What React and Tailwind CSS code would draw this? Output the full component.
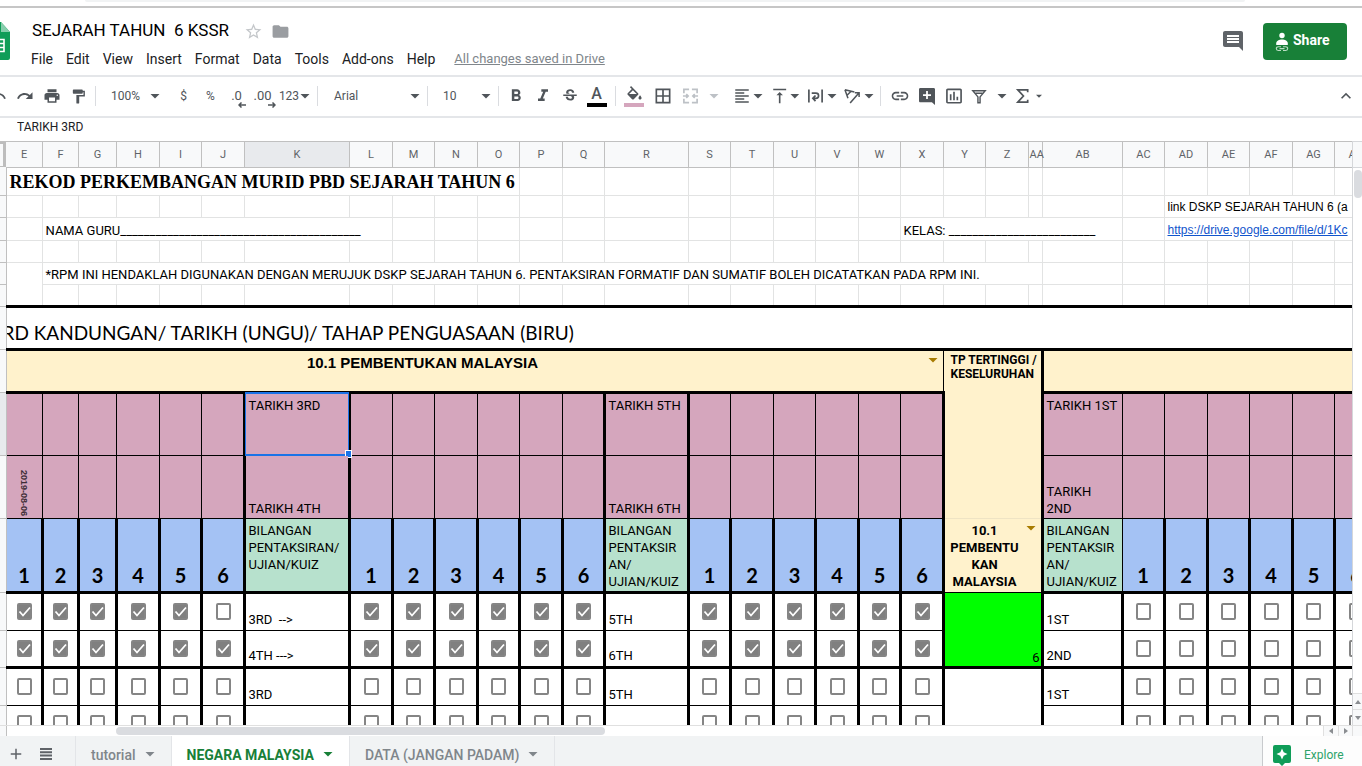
import React from "react";
import {
  MdUndo, MdRedo, MdPrint, MdFormatPaint, MdFormatBold, MdFormatItalic, MdStrikethroughS,
  MdBorderAll, MdFormatAlignLeft, MdVerticalAlignTop, MdLink, MdInsertChartOutlined,
  MdKeyboardArrowUp, MdStarBorder, MdFolder, MdComment, MdAdd,
} from "react-icons/md";

const EDGES = [
  0, 6, 42, 78, 116, 159, 201, 244, 349, 392, 434, 477, 519, 562, 604, 688, 730, 773, 815, 858, 900,
  943, 985, 1028, 1042, 1122, 1164, 1207, 1249, 1292, 1334, 1377,
];
const WIDTHS = EDGES.slice(1).map((edge, i) => edge - EDGES[i]);
const TABLE_WIDTH = EDGES[EDGES.length - 1];
const COLUMNS = "E F G H I J K L M N O P Q R S T U V W X Y Z AA AB AC AD AE AF AG AH".split(" ");

const R0 = "border-r border-r-[#e2e3e3]";
const B0 = "border-b border-b-[#e2e3e3]";
const R1 = "border-r border-r-black";
const B1 = "border-b border-b-black";
const R3 = "border-r-[3px] border-r-black";
const B3 = "border-b-[3px] border-b-black";

const group = (label) => [1, 2, 3, 4, 5, 6].map((n) => ({ kind: "num", n, id: label + n, last: n === 6 }));
const LAYOUT = [
  ...group("a"),
  { kind: "label", id: "K", slot: 0 },
  ...group("b"),
  { kind: "label", id: "R", slot: 1 },
  ...group("c"),
  { kind: "summary", id: "Y" },
  { kind: "label", id: "AB", slot: 2 },
  ...group("d"),
];

function RowHead({ active }) {
  return (
    <th
      scope="row"
      aria-label="Row"
      className={`border-r border-b border-[#c0c0c0] p-0 ${active ? "bg-[#e8eaed]" : "bg-[#f8f9fa]"}`}
    />
  );
}

function Blank({ count, bottom = B0 }) {
  return Array.from({ length: count }, (_, i) => <td key={i} className={`${R0} ${bottom} p-0`} />);
}

function Text({ span, children, bottom = B0, className = "align-bottom" }) {
  return (
    <td colSpan={span} className={`${R0} ${bottom} overflow-hidden pb-px pl-[3px] whitespace-pre ${className}`}>
      {children}
    </td>
  );
}

function Tick({ on, name }) {
  return (
    <label className="grid place-items-center">
      <input
        type="checkbox"
        defaultChecked={on}
        aria-label={name}
        className="peer col-start-1 row-start-1 h-[17px] w-[15px] appearance-none rounded-[2px] border-2 border-[#858585] checked:bg-[#808080]"
      />
      <svg viewBox="0 0 15 17" className="pointer-events-none col-start-1 row-start-1 hidden h-[17px] w-[15px] peer-checked:block">
        <path d="M2.5 8.5l3.500 4 7-8" fill="none" stroke="#fff" strokeWidth="1.8" />
      </svg>
    </label>
  );
}

function DateRow({ top }) {
  const labels = top ? ["TARIKH 3RD", "TARIKH 5TH", "TARIKH 1ST"] : ["TARIKH 4TH", "TARIKH 6TH", "TARIKH\n2ND"];
  return (
    <tr className="h-[63px]">
      <RowHead active={top} />
      {LAYOUT.map((c) => {
        if (c.kind === "summary") return null;
        if (c.kind === "num") {
          return (
            <td key={c.id} className={`${c.last ? R3 : R1} ${B1} bg-[#d5a6bd] p-0 align-bottom`}>
              {!top && c.id === "a1" && (
                <div className="flex justify-center pb-px font-['Liberation_Sans',Arial,sans-serif]">
                  <span className="text-[9px] leading-3 font-bold text-[#3d2d36] [writing-mode:vertical-rl]">2019-08-06</span>
                </div>
              )}
            </td>
          );
        }
        return (
          <td
            key={c.id}
            className={`${c.slot < 2 ? R3 : R1} ${B1} relative bg-[#d5a6bd] pl-[3px] whitespace-pre ${top ? "pt-[3px] align-top" : "pb-px align-bottom"}`}
          >
            {labels[c.slot]}
            {top && c.slot === 0 && (
              <span className="absolute -inset-x-px -top-0.5 -bottom-px border-x border-y-2 border-[#1a73e8]">
                <span className="absolute -right-1 -bottom-1 h-2 w-[7px] border border-white bg-[#1a73e8]" />
              </span>
            )}
          </td>
        );
      })}
    </tr>
  );
}

function CheckRow({ labels, checked, thick, summary }) {
  const bottom = thick ? B3 : B1;
  return (
    <tr className={thick ? "h-[37px]" : "h-[38px]"}>
      <RowHead />
      {LAYOUT.map((c) => {
        if (c.kind === "summary") return summary ? React.cloneElement(summary, { key: c.id }) : null;
        if (c.kind === "num") {
          return (
            <td key={c.id} className={`${R3} ${bottom} p-0 pl-px`}>
              <Tick on={checked(c.id)} name={`${c.id} ${labels[0]}`} />
            </td>
          );
        }
        return (
          <td key={c.id} className={`${R3} ${bottom} pb-0.5 pl-[3px] align-bottom whitespace-pre`}>
            {labels[c.slot]}
          </td>
        );
      })}
    </tr>
  );
}

function Grid() {
  return (
    <table
      className="table-fixed border-collapse font-['Roboto',sans-serif] text-[13px] leading-[17px] text-black"
      style={{ width: TABLE_WIDTH }}
    >
      <colgroup>
        {WIDTHS.map((w, i) => (
          <col key={i} style={{ width: w }} />
        ))}
      </colgroup>
      <thead>
        <tr className="h-[25px]">
          <th aria-label="Select all" className="bg-[#bdbdbd] p-0">
            <div className="h-[22px] w-[3px] bg-[#f8f9fa]" />
          </th>
          {COLUMNS.map((c) => (
            <th
              key={c}
              scope="col"
              className={`border-r border-b border-[#c0c0c0] p-0 pl-px text-center text-[11px] font-normal text-[#5f6368] ${c === "K" ? "bg-[#e8eaed]" : "bg-[#f8f9fa]"}`}
            >
              {c}
            </th>
          ))}
        </tr>
      </thead>
      <tbody>
        <tr className="h-[28px]">
          <RowHead />
          <Text span={11} className="align-bottom font-['Liberation_Serif',serif] text-[18px] leading-6 font-bold">
            REKOD PERKEMBANGAN MURID PBD SEJARAH TAHUN 6
          </Text>
          <Blank count={19} />
        </tr>
        <tr className="h-[22px]">
          <RowHead />
          <Blank count={25} />
          <Text span={5} className="align-bottom font-['Liberation_Sans',Arial,sans-serif] text-[12px]">link DSKP SEJARAH TAHUN 6 (a</Text>
        </tr>
        <tr className="h-[23px]">
          <RowHead />
          <Blank count={1} />
          <Text span={7}>NAMA GURU_________________________________________</Text>
          <Blank count={11} />
          <Text span={5}>KELAS: _________________________</Text>
          <Blank count={1} />
          <Text span={5} className="align-bottom font-['Liberation_Sans',Arial,sans-serif] text-[12px]">
            <a href="#dskp" className="text-[#1155cc] underline">https://drive.google.com/file/d/1Kc</a>
          </Text>
        </tr>
        <tr className="h-[22px]">
          <RowHead />
          <Blank count={30} />
        </tr>
        <tr className="h-[22px]">
          <RowHead />
          <td rowSpan={2} className={`${R0} ${B3} p-0`} />
          <Text span={22}>
            *RPM INI HENDAKLAH DIGUNAKAN DENGAN MERUJUK DSKP SEJARAH TAHUN 6. PENTAKSIRAN FORMATIF DAN SUMATIF BOLEH DICATATKAN PADA RPM INI.
          </Text>
          <Blank count={7} />
        </tr>
        <tr className="h-[22px]">
          <RowHead />
          <Blank count={29} bottom={B3} />
        </tr>
        <tr className="h-[43px]">
          <RowHead />
          <td colSpan={30} className={`${B3} overflow-hidden p-0 align-bottom`}>
            <div className="-ml-1 pb-[3px] font-['Lato',sans-serif] text-[19px] leading-6 whitespace-pre">
              RD KANDUNGAN/ TARIKH (UNGU)/ TAHAP PENGUASAAN (BIRU)
            </div>
          </td>
        </tr>
        <tr className="h-[43px]">
          <RowHead />
          <td colSpan={20} className={`${R1} ${B3} bg-[#fff2cc] p-0 align-top`}>
            <div className="flex items-start pt-[3px] pr-1">
              <span className="flex-1 pr-[96px] pl-2 text-center font-['Liberation_Sans',Arial,sans-serif] text-[15px] font-bold">
                10.1 PEMBENTUKAN MALAYSIA
              </span>
              <button type="button" aria-label="Filter topic" className="text-[#a87c00]">
                <Caret className="h-3 w-3" />
              </button>
            </div>
          </td>
          <td colSpan={3} rowSpan={3} className={`${R3} border-b border-b-[#efe4c4] bg-[#fff2cc] p-0 pt-0.5 align-top`}>
            <div className="pl-1.5 text-[12px] leading-[14px] font-bold whitespace-pre">{"TP TERTINGGI /\nKESELURUHAN"}</div>
          </td>
          <td colSpan={7} className={`${B3} bg-[#fff2cc] p-0`} />
        </tr>
        <DateRow top />
        <DateRow />
        <tr className="h-[74px]">
          <RowHead />
          {LAYOUT.map((c) => {
            if (c.kind === "num") {
              return (
                <td key={c.id} className={`${R3} ${B3} bg-[#a4c2f4] pb-1 pl-px text-center align-bottom font-['Lato',sans-serif] text-[20px] leading-6 font-bold`}>
                  {c.n}
                </td>
              );
            }
            if (c.kind === "summary") {
              return (
                <td key={c.id} colSpan={3} className={`${R3} ${B1} bg-[#fff2cc] p-0 pt-[3px] align-top`}>
                  <div className="flex items-start pr-1">
                    <span className="flex-1 text-center font-bold whitespace-pre">{"10.1\nPEMBENTU\nKAN\nMALAYSIA"}</span>
                    <button type="button" aria-label="Filter result" className="text-[#a87c00]">
                      <Caret className="h-3 w-3" />
                    </button>
                  </div>
                </td>
              );
            }
            return (
              <td key={c.id} className={`${c.slot < 2 ? R3 : R1} ${B3} bg-[#b7e1cd] pt-[3px] pl-[3px] align-top whitespace-pre`}>
                {c.slot === 0 ? "BILANGAN\nPENTAKSIRAN/\nUJIAN/KUIZ" : "BILANGAN\nPENTAKSIR\nAN/\nUJIAN/KUIZ"}
              </td>
            );
          })}
        </tr>
        <CheckRow
          labels={["3RD  -->", "5TH", "1ST"]}
          checked={(id) => id[0] !== "d" && id !== "a6"}
          summary={
            <td colSpan={3} rowSpan={2} className={`${R3} ${B3} bg-[#00ff00] pr-px text-right align-bottom`}>
              6
            </td>
          }
        />
        <CheckRow labels={["4TH --->", "6TH", "2ND"]} checked={(id) => id[0] !== "d"} thick />
        <CheckRow
          labels={["3RD", "5TH", "1ST"]}
          checked={() => false}
          summary={<td colSpan={3} rowSpan={2} className={`${R3} ${B3} p-0`} />}
        />
        <CheckRow labels={["", "", ""]} checked={() => false} thick />
      </tbody>
    </table>
  );
}

function Caret({ className = "h-2 w-2" }) {
  return (
    <svg viewBox="0 0 12 12" className={className} fill="currentColor">
      <path d="M1.500 4h9L6 8.500z" />
    </svg>
  );
}

function Tool({ label, children, className = "w-[27px]" }) {
  return (
    <button type="button" aria-label={label} className={`flex h-7 shrink-0 items-center justify-center ${className}`}>
      {children}
    </button>
  );
}

function MenuTool({ label, children, className = "w-[37px]", caret = "h-3 w-3" }) {
  return (
    <button type="button" aria-label={label} className={`flex h-7 shrink-0 items-center justify-between pr-0.5 pl-1 ${className}`}>
      {children}
      <Caret className={caret} />
    </button>
  );
}

function Divider() {
  return <span className="mx-[3px] h-5 w-px shrink-0 bg-[#dadce0]" />;
}

function Picker({ label, value, className }) {
  return (
    <label className={`grid shrink-0 items-center ${className}`}>
      <select aria-label={label} defaultValue={value} className="col-start-1 row-start-1 appearance-none pl-3 outline-none">
        <option>{value}</option>
      </select>
      <Caret className="pointer-events-none col-start-1 row-start-1 mr-[3px] h-3 w-3 justify-self-end" />
    </label>
  );
}

function Stroke({ d, width = 1.8, className = "h-[18px] w-[17px]" }) {
  return (
    <svg viewBox="0 0 18 18" className={className} fill="none" stroke="currentColor" strokeWidth={width}>
      <path d={d} />
    </svg>
  );
}

function Decimals({ text, d }) {
  return (
    <span className="relative leading-4">
      {text}
      <svg viewBox="0 0 8 6" className="absolute -right-1 -bottom-1 h-1.5 w-2" fill="none" stroke="currentColor" strokeWidth="1.500">
        <path d={d} />
      </svg>
    </span>
  );
}

function Header() {
  return (
    <header className="flex h-[67px] shrink-0 items-start">
      <svg viewBox="0 0 10 38" className="mt-3.5 h-[38px] w-2.5 shrink-0">
        <path d="M0 0h1l9 10v26a2 2 0 0 1-2 2H0z" fill="#0f9d58" />
        <path d="M1 0l9 10H1z" fill="#87ceac" />
        <path d="M0 17.500h4v12H0M0 21.500h4M0 25.500h4" fill="none" stroke="#fff" strokeWidth="1.600" />
      </svg>
      <div className="flex flex-col pt-[11px] pl-[22px]">
        <div className="flex items-center">
          <input
            aria-label="Document title"
            defaultValue="SEJARAH TAHUN  6 KSSR"
            className="h-6 w-[212px] text-[17px] whitespace-pre text-black outline-none"
          />
          <button type="button" aria-label="Star" className="text-[#c4c7ca]">
            <MdStarBorder className="h-[19px] w-[19px]" />
          </button>
          <button type="button" aria-label="Move to folder" className="ml-2 text-[#9a9da1]">
            <MdFolder className="h-[19px] w-[19px]" />
          </button>
        </div>
        <nav className="-ml-px flex items-center gap-[13px] pt-1 text-[14px] leading-6 text-[#202124]">
          {["File", "Edit", "View", "Insert", "Format", "Data", "Tools", "Add-ons", "Help"].map((m) => (
            <button type="button" key={m}>{m}</button>
          ))}
          <a href="#history" className="ml-1.5 text-[13px] text-[#80868b] underline">All changes saved in Drive</a>
        </nav>
      </div>
      <div className="mr-[15px] ml-auto flex items-center gap-[18px] pt-[15px]">
        <button type="button" aria-label="Comments" className="pb-0.5 text-[#5f6368]">
          <MdComment className="h-6 w-6" />
        </button>
        <button type="button" className="flex h-[37px] w-[84px] items-center gap-1 rounded-[4px] bg-[#188038] pb-0.5 pl-3 text-[14px] font-bold text-white">
          <svg viewBox="0 0 14 20" className="mt-0.5 h-5 w-3.5">
            <circle cx="7" cy="3.500" r="2.700" fill="#fff" />
            <path d="M1.200 13V11.500c0-2.800 3-4 5.800-4s5.800 1.200 5.800 4V13z" fill="#fff" />
            <path d="M6 14.700H3.200a1.900 1.900 0 0 0 0 3.800H6M8 14.700h2.800a1.900 1.900 0 0 1 0 3.800H8M4.500 16.600h5" fill="none" stroke="#b9dcc3" strokeWidth="1.100" />
          </svg>
          Share
        </button>
      </div>
    </header>
  );
}

function Toolbar() {
  return (
    <div className="flex h-[43px] shrink-0 items-center border-y-2 border-[#e4e6e9] pb-px text-[12px] text-[#50555a]">
      <Tool label="Undo" className="-ml-4 w-[27px]"><MdUndo className="h-[18px] w-[18px]" /></Tool>
      <Tool label="Redo"><MdRedo className="h-[18px] w-[18px]" /></Tool>
      <Tool label="Print"><MdPrint className="h-[18px] w-[18px]" /></Tool>
      <Tool label="Paint format"><MdFormatPaint className="h-[17px] w-[17px]" /></Tool>
      <Divider />
      <Picker label="Zoom" value="100%" className="w-[65px]" />
      <span className="w-1.5" />
      <Tool label="Currency">$</Tool>
      <Tool label="Percent">%</Tool>
      <Tool label="Decrease decimals" className="w-[25px] text-[13px]"><Decimals text=".0" d="M8 3H1M3.500 .5L1 3l2.500 2.500" /></Tool>
      <Tool label="Increase decimals" className="w-[27px] text-[13px]"><Decimals text=".00" d="M0 3h7M4.500 .5L7 3l-2.500 2.500" /></Tool>
      <Tool label="More formats" className="w-[38px]">123<Caret className="h-3 w-3" /></Tool>
      <Divider />
      <Picker label="Font" value="Arial" className="ml-px w-[102px]" />
      <Divider />
      <Picker label="Font size" value="10" className="w-[64px]" />
      <Divider />
      <Tool label="Bold"><MdFormatBold className="h-5 w-5" /></Tool>
      <Tool label="Italic"><MdFormatItalic className="h-5 w-5" /></Tool>
      <Tool label="Strikethrough"><MdStrikethroughS className="h-[18px] w-[18px]" /></Tool>
      <Tool label="Text color">
        <span className="flex flex-col items-center">
          <span className="text-[16px] leading-[18px] font-medium">A</span>
          <span className="h-1 w-5 bg-black" />
        </span>
      </Tool>
      <span className="w-0.5" />
      <Divider />
      <Tool label="Fill color" className="w-[30px]">
        <span className="flex flex-col items-center">
          <svg viewBox="0 0 24 20" className="h-[18px] w-[19px]" fill="currentColor">
            <path d="M16.560 8.940L7.620 0 6.210 1.410l2.380 2.380-5.150 5.150a1.490 1.490 0 0 0 0 2.120l5.500 5.500c.29.29.68.440 1.060.440s.77-.15 1.060-.440l5.500-5.500c.59-.58.59-1.530 0-2.120zM5.210 10L10 5.210 14.790 10H5.210zM19 11.500s-2 2.170-2 3.500c0 1.100.9 2 2 2s2-.9 2-2c0-1.330-2-3.500-2-3.500z" />
          </svg>
          <span className="h-1 w-5 bg-[#d5a6bd]" />
        </span>
      </Tool>
      <Tool label="Borders"><MdBorderAll className="h-5 w-5" /></Tool>
      <span className="w-0.5" />
      <MenuTool label="Merge cells" className="w-[44px] text-[#bdc1c6]">
        <Stroke d="M2 6V2h5.500M16 6V2h-5.500M2 12v4h5.500M16 12v4h-5.500M1 9h5M17 9h-5M4.500 7l2 2-2 2M13.500 7l-2 2 2 2" />
      </MenuTool>
      <span className="w-[7px]" />
      <MenuTool label="Horizontal align"><MdFormatAlignLeft className="h-[18px] w-[18px]" /></MenuTool>
      <MenuTool label="Vertical align"><MdVerticalAlignTop className="h-[20px] w-[20px]" /></MenuTool>
      <MenuTool label="Text wrapping"><Stroke d="M2 2v14M16 2v14M5 6h4.500a2.700 2.700 0 0 1 0 5.500H6.500M9 8.500l-2.800 3 2.800 3" /></MenuTool>
      <MenuTool label="Text rotation"><Stroke width={1.6} d="M1 2.500l10 2.200M1 2.500l3.200 9M7.500 4L3.200 8.200M6.500 16.500L15.500 6M11.500 5.500h4.500v4.500" /></MenuTool>
      <Divider />
      <Tool label="Insert link" className="ml-0.5 w-[27px]"><MdLink className="h-5 w-5" /></Tool>
      <Tool label="Insert comment">
        <svg viewBox="0 0 18 20" className="h-[18px] w-4" fill="currentColor">
          <path d="M1.500 1h15c.8 0 1.500.7 1.500 1.500V20l-3.500-3H1.500C.7 17 0 16.300 0 15.500v-13C0 1.700.7 1 1.500 1z" />
          <path d="M9 4.500v9M4.500 9h9" stroke="#fff" strokeWidth="2" />
        </svg>
      </Tool>
      <Tool label="Insert chart"><MdInsertChartOutlined className="h-5 w-5" /></Tool>
      <MenuTool label="Filter" className="w-[43px]">
        <Stroke d="M2 3h14l-5.800 7v6.500H7.800V10zM5 6h8" width={1.6} className="h-4 w-4" />
      </MenuTool>
      <MenuTool label="Functions" className="w-[35px]" caret="h-2 w-2">
        <Stroke d="M14.500 5V2.500H4L10 9l-6 6.500h10.500V13" />
      </MenuTool>
      <Tool label="Hide menus" className="mr-[3px] ml-auto w-[27px]"><MdKeyboardArrowUp className="h-5 w-5" /></Tool>
    </div>
  );
}

function SheetTab({ name, active }) {
  return (
    <button
      type="button"
      className={`flex h-full items-center gap-2 border-r border-[#e3e5e8] px-[15px] ${active ? "bg-white font-bold text-[#188038]" : "font-medium text-[#80868b]"}`}
    >
      <span className="pt-2">{name}</span>
      <Caret className="mt-1.5 h-3 w-3" />
    </button>
  );
}

function Footer() {
  return (
    <footer className="flex h-[30px] shrink-0 items-center bg-[#f1f3f4] text-[14px]">
      <button type="button" aria-label="Add sheet" className="ml-[7px] pt-1.5 text-[#5f6368]"><MdAdd className="h-[18px] w-[18px]" /></button>
      <button type="button" aria-label="All sheets" className="mr-[23px] ml-[15px] pt-1.5 text-[#5f6368]">
        <svg viewBox="0 0 12 12" className="h-3 w-3" fill="none" stroke="currentColor" strokeWidth="2">
          <path d="M0 1h12M0 4.300h12M0 7.600h12M0 11h12" />
        </svg>
      </button>
      <div className="flex h-full border-l border-[#e3e5e8]">
        <SheetTab name="tutorial" />
        <SheetTab name="NEGARA MALAYSIA" active />
        <SheetTab name="DATA (JANGAN PADAM)" />
      </div>
      <button type="button" className="ml-auto flex h-full w-[100px] items-center gap-[13px] border-l border-[#c8cacd] bg-[#fdfdfd] pl-2.5 text-[12px] text-[#2fa36b]">
        <svg viewBox="0 0 18 21" className="mt-2 h-[21px] w-[18px]">
          <path d="M2 0h14a2 2 0 0 1 2 2v14a2 2 0 0 1-2 2h-4l-3 3-3-3H2a2 2 0 0 1-2-2V2a2 2 0 0 1 2-2z" fill="#0f9d58" />
          <path d="M9 3.500l1.700 3.800 3.800 1.700-3.800 1.700L9 14.500l-1.700-3.800L3.500 9l3.800-1.700z" fill="#fff" />
        </svg>
        <span className="pt-2">Explore</span>
      </button>
    </footer>
  );
}

function ScrollArrow({ label, d, className }) {
  return (
    <button type="button" aria-label={label} className={`flex items-center justify-center border-[#e0e0e0] bg-[#f8f9fa] text-[#8a8d91] ${className}`}>
      <svg viewBox="0 0 6 6" className="h-1.5 w-1.5" fill="currentColor"><path d={d} /></svg>
    </button>
  );
}

export default function App() {
  return (
    <div className="flex h-screen flex-col overflow-hidden bg-white font-['Roboto',sans-serif]">
      <div className="h-2 shrink-0 border-b-2 border-[#c6c6c6]">
        <div className="mr-[117px] ml-[85px] h-0.5 rounded-b-full bg-[#f1f3f4]" />
      </div>
      <Header />
      <Toolbar />
      <div className="flex h-[23px] shrink-0 items-start pl-[17px]">
        <input aria-label="Formula" defaultValue="TARIKH 3RD" className="h-[18px] w-full text-[12px] text-[#202124] outline-none" />
      </div>
      <main className="flex min-h-0 flex-1">
        <div className="min-w-0 flex-1 overflow-hidden border-t border-[#c0c0c0]">
          <Grid />
        </div>
        <div className="flex w-2.5 shrink-0 flex-col border-l border-[#d5d7da]">
          <div className="h-[27px] border-y border-[#d5d7da] bg-[#f8f9fa]" />
          <div className="mt-0.5 ml-px h-7 w-2 rounded-full bg-[#dadce0]" />
          <ScrollArrow label="Scroll up" d="M0 5h6L3 1z" className="mt-auto h-4 border-t" />
          <ScrollArrow label="Scroll down" d="M0 1h6L3 5z" className="h-4 border-t" />
        </div>
      </main>
      <div className="flex h-[11px] shrink-0 items-center border-t border-[#e0e0e0]">
        <div className="h-full w-[7px] border-r border-[#c0c0c0] bg-[#f8f9fa]" />
        <div className="ml-[109px] h-2 w-[489px] rounded-full bg-[#dadce0]" />
        <ScrollArrow label="Scroll left" d="M5 0v6L1 3z" className="ml-auto h-full w-[15px] border-l" />
        <ScrollArrow label="Scroll right" d="M1 0v6l4-3z" className="h-full w-[15px] border-x" />
        <div className="h-full w-[9px] bg-[#f8f9fa]" />
      </div>
      <Footer />
    </div>
  );
}
